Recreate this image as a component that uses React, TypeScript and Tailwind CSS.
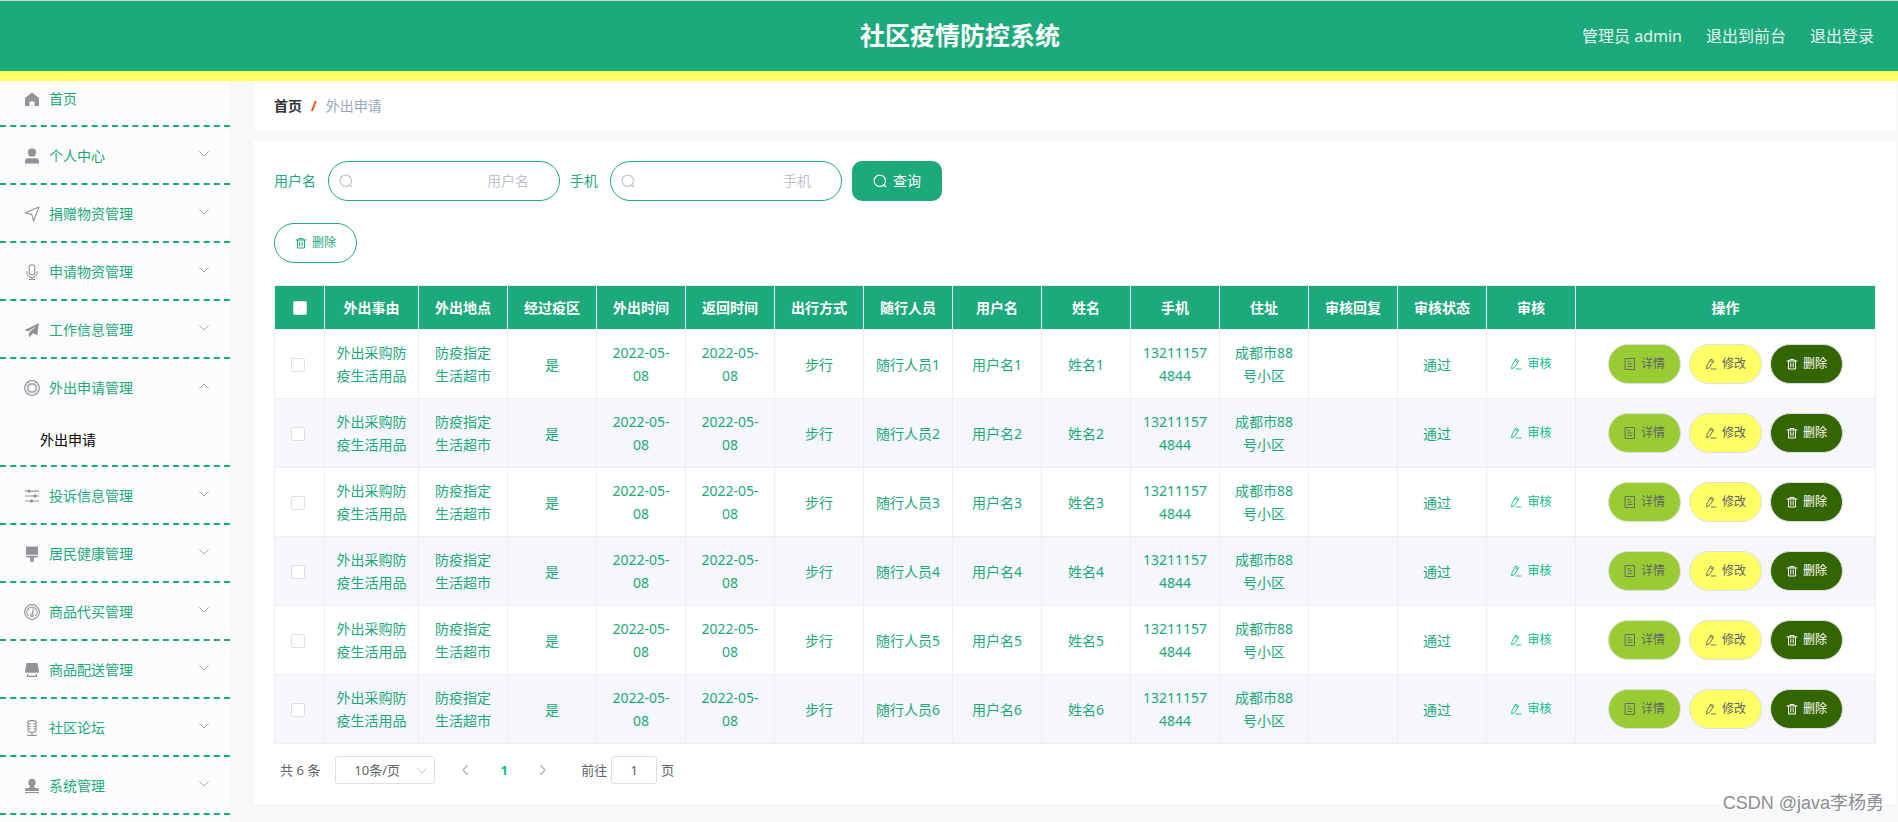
import React from "react";

type IconProps = { className?: string };

const line = {
  fill: "none",
  stroke: "currentColor",
  strokeLinecap: "round" as const,
  strokeLinejoin: "round" as const,
};

function Search({ className }: IconProps) {
  return (
    <svg viewBox="0 0 14 14" className={className} aria-hidden="true" {...line} strokeWidth="1.2">
      <circle cx="6.8" cy="6.8" r="5.7" />
      <path d="M10.8 11l1.9 1.7" />
    </svg>
  );
}

function Trash({ className }: IconProps) {
  return (
    <svg viewBox="0 0 12 12" className={className} aria-hidden="true" {...line}>
      <path d="M1 3h10M4 3V1.500h4V3M2.500 3v8h7V3M4.800 5v4M7.200 5v4" />
    </svg>
  );
}

function Edit({ className }: IconProps) {
  return (
    <svg viewBox="0 0 12 12" className={className} aria-hidden="true" {...line} strokeWidth="0.9">
      <path d="M6.2 1.200l2.500 1.500-4.200 6.800-2.900 1.400.4-3.100zM5.300 2.700l2.500 1.500M6 11h5" />
    </svg>
  );
}

function Tickets({ className }: IconProps) {
  return (
    <svg viewBox="0 0 12 12" className={className} aria-hidden="true" {...line} strokeWidth="0.9">
      <path d="M1.500 .5h9v11h-9zM4 3.500h2M4 6h4M4 8.500h4" />
    </svg>
  );
}

function Chevron({ className }: IconProps) {
  return (
    <svg viewBox="0 0 10 6" className={className} aria-hidden="true" {...line}>
      <path d="M0.6 0.6L5 5l4.400-4.400" />
    </svg>
  );
}

const icons: Record<string, React.ReactNode> = {
  home: <path fill="currentColor" d="M8 1.500l7 5.500V15h-4.400v-4.500H5.400V15H1V7z" />,
  user: (
    <g fill="currentColor">
      <rect x="4" y="0.500" width="8" height="8" rx="3.600" />
      <path d="M1 15.500v-2.300a3 3 0 0 1 3-3h8a3 3 0 0 1 3 3v2.300z" />
    </g>
  ),
  position: <path {...line} strokeWidth="1.100" d="M1 6.800L15 1 9.500 15 7.800 8.400z" />,
  mic: (
    <g {...line} strokeWidth="1.100">
      <rect x="5.200" y="0.800" width="5.600" height="10" rx="2.800" />
      <path d="M2.800 7.500v.7a5.200 5.200 0 0 0 10.400 0v-.7M8 13.400v2M5.400 15.400h5.200" />
    </g>
  ),
  plane: <path fill="currentColor" d="M15 1L13.300 13.200 9 11.300 6 14.800 5 15V10.800L12 4 4 9.600 0.800 8z" />,
  help: (
    <g {...line} strokeWidth="1.200">
      <circle cx="8" cy="8" r="7.300" />
      <circle cx="8" cy="8" r="4.200" />
      <path d="M4.300 1.800l1.600 2.600M11.700 1.800l-1.600 2.600M4.300 14.200l1.600-2.600M11.700 14.200l-1.600-2.600M1.800 4.300l2.600 1.600M14.200 4.300l-2.600 1.600M1.800 11.700l2.600-1.600M14.200 11.700l-2.600-1.600" strokeWidth="0.700" />
    </g>
  ),
  operation: (
    <g fill="currentColor">
      <path d="M1 2.500h14v1.200H1zM1 7.400h14v1.200H1zM1 12.400h14v1.200H1z" />
      <circle cx="5" cy="3.100" r="1.700" />
      <circle cx="11" cy="8" r="1.700" />
      <circle cx="7.500" cy="13" r="1.700" />
    </g>
  ),
  brush: (
    <path fill="currentColor" d="M2 .5h12v8.300H2zM2 9.800h12v.8a1 1 0 0 1-1 1H9.800V15a1 1 0 0 1-1 1H7.200a1 1 0 0 1-1-1v-3.400H3a1 1 0 0 1-1-1z" />
  ),
  odometer: (
    <g {...line} strokeWidth="1.100">
      <circle cx="8" cy="8" r="7.400" />
      <path d="M4 11.600a5.200 5.200 0 1 1 8 0" />
      <path d="M9.300 4.800L8.300 10" />
      <circle cx="8" cy="11.300" r="1.300" />
    </g>
  ),
  shop: (
    <g fill="currentColor">
      <path d="M2.600 1h10.800L15 9.500a1.500 1.500 0 0 1-2.800.7 1.600 1.600 0 0 1-2.800 0 1.600 1.600 0 0 1-2.800 0 1.600 1.600 0 0 1-2.800 0A1.500 1.500 0 0 1 1 9.500z" />
      <path d="M3 12h1.200v1.800h7.600V12H13v3H3z" />
    </g>
  ),
  studio: (
    <g {...line} strokeWidth="1.100">
      <rect x="4" y="0.600" width="8" height="11.700" rx="2.200" />
      <path d="M4.300 4h2.200M9.500 4h2.200M4.300 6.500h2.200M9.500 6.500h2.200M4.300 9h2.200M9.500 9h2.200M8 12.300v3M3.600 15.400h8.800" />
    </g>
  ),
  stamp: (
    <g fill="currentColor">
      <path d="M8 .8a3.700 3.700 0 0 1 2.300 6.600l.2 2.600H13a2 2 0 0 1 2 2v1H1v-1a2 2 0 0 1 2-2h2.500l.2-2.600A3.700 3.700 0 0 1 8 .8z" />
      <path d="M1 14h14v1.100H1z" />
    </g>
  ),
};

function MenuIcon({ name }: { name: string }) {
  return (
    <svg viewBox="0 0 16 16" className="size-4 shrink-0 text-[#909399]" aria-hidden="true">
      {icons[name]}
    </svg>
  );
}

const menu: { icon: string; label: string; child?: string }[] = [
  { icon: "user", label: "个人中心" },
  { icon: "position", label: "捐赠物资管理" },
  { icon: "mic", label: "申请物资管理" },
  { icon: "plane", label: "工作信息管理" },
  { icon: "help", label: "外出申请管理", child: "外出申请" },
  { icon: "operation", label: "投诉信息管理" },
  { icon: "brush", label: "居民健康管理" },
  { icon: "odometer", label: "商品代买管理" },
  { icon: "shop", label: "商品配送管理" },
  { icon: "studio", label: "社区论坛" },
  { icon: "stamp", label: "系统管理" },
];

const columns = [
  "外出事由", "外出地点", "经过疫区", "外出时间", "返回时间", "出行方式", "随行人员",
  "用户名", "姓名", "手机", "住址", "审核回复", "审核状态", "审核", "操作",
];

const rows = [1, 2, 3, 4, 5, 6].map((n) => [
  "外出采购防疫生活用品", "防疫指定生活超市", "是", "2022-05-08", "2022-05-08", "步行",
  `随行人员${n}`, `用户名${n}`, `姓名${n}`, "132111574844", "成都市88号小区", "",
]);

const pill = "flex h-10 items-center gap-[5px] rounded-[20px] border px-[15px] text-xs";

function SearchField({ id, label }: { id: string; label: string }) {
  return (
    <div className="flex items-center gap-3">
      <label htmlFor={id} className="text-[#1ca97b]">{label}</label>
      <div className="flex h-10 w-58 items-center rounded-[20px] border border-[#1ca97b] pr-[30px] pl-2.5">
        <Search className="size-3.5 shrink-0 text-[#c0c4cc]" />
        <input
          id={id}
          placeholder={label}
          className="min-w-0 flex-1 bg-transparent text-right outline-none placeholder:text-[#c0c4cc]"
        />
      </div>
    </div>
  );
}

function Sidebar() {
  return (
    <nav className="w-[230px] shrink-0 bg-[#fcfcfc] text-[#1ca97b]">
      <a href="#home" className="flex h-[46px] items-center gap-[9px] border-b-2 border-dashed border-[#1ca97b] pb-2 pl-6">
        <MenuIcon name="home" />
        首页
      </a>
      {menu.map((item) => (
        <div key={item.label} className="border-b-2 border-dashed border-[#1ca97b]">
          <button className="flex h-14 w-full items-center gap-[9px] pt-0.5 pr-[21px] pl-6 text-left">
            <MenuIcon name={item.icon} />
            <span className="flex-1">{item.label}</span>
            <Chevron className={item.child ? "mb-1 h-1.5 w-2.5 rotate-180 text-[#a8abb2]" : "mb-1 h-1.5 w-2.5 text-[#a8abb2]"} />
          </button>
          {item.child && (
            <a href="#trips" className="flex h-[50px] items-center pl-10 text-black">{item.child}</a>
          )}
        </div>
      ))}
    </nav>
  );
}

function RequestTable() {
  const cell = "border-r border-b border-[#ebeef5]";
  const box = "mx-auto block size-3.5 appearance-none rounded-xs border border-[#dcdfe6] bg-white";
  return (
    <table className="w-full table-fixed border-separate border-spacing-0 border-t border-l border-[#ebeef5] text-center leading-[23px] text-[#1ca97b]">
      <colgroup>
        <col className="w-[50px]" />
        <col className="w-[94px]" />
        {columns.slice(1, -1).map((c) => <col key={c} />)}
        <col className="w-[300px]" />
      </colgroup>
      <thead>
        <tr className="h-11 bg-[#1ca97b] text-white">
          <th className={cell}>
            <input type="checkbox" aria-label="全选" className={box} />
          </th>
          {columns.map((c) => <th key={c} className={`${cell} font-bold`}>{c}</th>)}
        </tr>
      </thead>
      <tbody>
        {rows.map((row, i) => (
          <tr key={i} className="h-[69px] even:bg-[#f5f7fa]">
            <td className={`${cell} pt-0.5 pr-1`}>
              <input type="checkbox" aria-label={row[7]} className={box} />
            </td>
            {row.map((value, j) => <td key={j} className={`${cell} px-2.5 wrap-break-word`}>{value}</td>)}
            <td className={`${cell} pr-2.5`}>通过</td>
            <td className={cell}>
              <button className="mx-auto flex items-center gap-[5px] text-xs text-[#0bbd87]">
                <Edit className="size-3" />审核
              </button>
            </td>
            <td className={cell}>
              <div className="flex justify-center gap-2">
                <button className={`${pill} border-[#dcdfe6] bg-[#99cc33] text-[#606266]`}><Tickets className="size-3" />详情</button>
                <button className={`${pill} border-[#dcdfe6] bg-[#ffff66] text-[#606266]`}><Edit className="size-3" />修改</button>
                <button className={`${pill} border-[#dcdfe6] bg-[#336600] text-white`}><Trash className="size-3" />删除</button>
              </div>
            </td>
          </tr>
        ))}
      </tbody>
    </table>
  );
}

function Pagination() {
  return (
    <div className="flex h-7 items-center text-[13px] text-[#606266]">
      <span className="pl-1.5">共 6 条</span>
      <div className="relative ml-[15px]">
        <select aria-label="每页条数" className="h-7 w-[100px] appearance-none rounded-[3px] border border-[#dcdfe6] bg-white pr-4 text-center outline-none">
          <option>10条/页</option>
        </select>
        <Chevron className="pointer-events-none absolute top-3 right-2 h-1.5 w-2.5 text-[#c0c4cc]" />
      </div>
      <button aria-label="上一页" className="ml-6 flex w-3 justify-center text-[#b4b8c0]"><Chevron className="h-1.5 w-2.5 rotate-90 stroke-[1.5]" /></button>
      <button className="ml-[15px] w-9 text-center font-bold text-[#0bbd87]">1</button>
      <button aria-label="下一页" className="ml-[15px] flex w-3 justify-center text-[#b4b8c0]"><Chevron className="h-1.5 w-2.5 -rotate-90 stroke-[1.5]" /></button>
      <label htmlFor="page" className="ml-8">前往</label>
      <input id="page" defaultValue="1" className="mx-1 h-7 w-[46px] rounded-[3px] border border-[#dcdfe6] text-center outline-none" />
      <span>页</span>
    </div>
  );
}

export default function App() {
  return (
    <div className="relative flex min-h-screen flex-col bg-[#f7f8fa] font-['Noto_Sans','Noto_Sans_CJK_SC',sans-serif] text-sm">
      <header className="grid h-[81px] grid-cols-[1fr_auto_1fr] items-center border-t border-b-10 border-t-[#c8d8d2] border-b-[#ffff66] bg-[#1ca97b] pr-6 pl-[46px]">
        <h1 className="col-start-2 text-[25px] font-bold text-white">社区疫情防控系统</h1>
        <div className="flex justify-end gap-6 text-base text-[#e4f4ee]">
          <span>管理员 admin</span>
          <a href="#front">退出到前台</a>
          <a href="#logout">退出登录</a>
        </div>
      </header>
      <div className="flex flex-1">
        <Sidebar />
        <main className="min-w-0 flex-1 pr-0.5 pl-6">
          <div className="flex h-[50px] items-center rounded-b bg-white px-5">
            <a href="#home" className="font-bold text-[#303133]">首页</a>
            <span className="mx-[9px] font-bold text-[#ff4a12]">/</span>
            <span className="text-[#97a8be]">外出申请</span>
          </div>
          <section className="mt-2.5 bg-white p-5">
            <div className="flex items-center gap-2.5">
              <SearchField id="username" label="用户名" />
              <SearchField id="phone" label="手机" />
              <button className="flex h-10 items-center gap-1.5 rounded-[10px] bg-[#1ca97b] px-[21px] text-white">
                <Search className="size-3.5" />查询
              </button>
            </div>
            <button className="my-[22px] flex h-10 items-center gap-[5px] rounded-[20px] border border-[#1ca97b] px-5 text-xs text-[#1ca97b]">
              <Trash className="size-3" />删除
            </button>
            <RequestTable />
            <div className="pt-3"><Pagination /></div>
          </section>
        </main>
      </div>
      <div className="pointer-events-none absolute right-3.5 bottom-[7px] font-['Liberation_Sans','Noto_Sans_CJK_SC',sans-serif] text-lg leading-6 text-[#8b8e92] [text-shadow:1px_1px_0_#ffffff]">
        CSDN @java李杨勇
      </div>
    </div>
  );
}
